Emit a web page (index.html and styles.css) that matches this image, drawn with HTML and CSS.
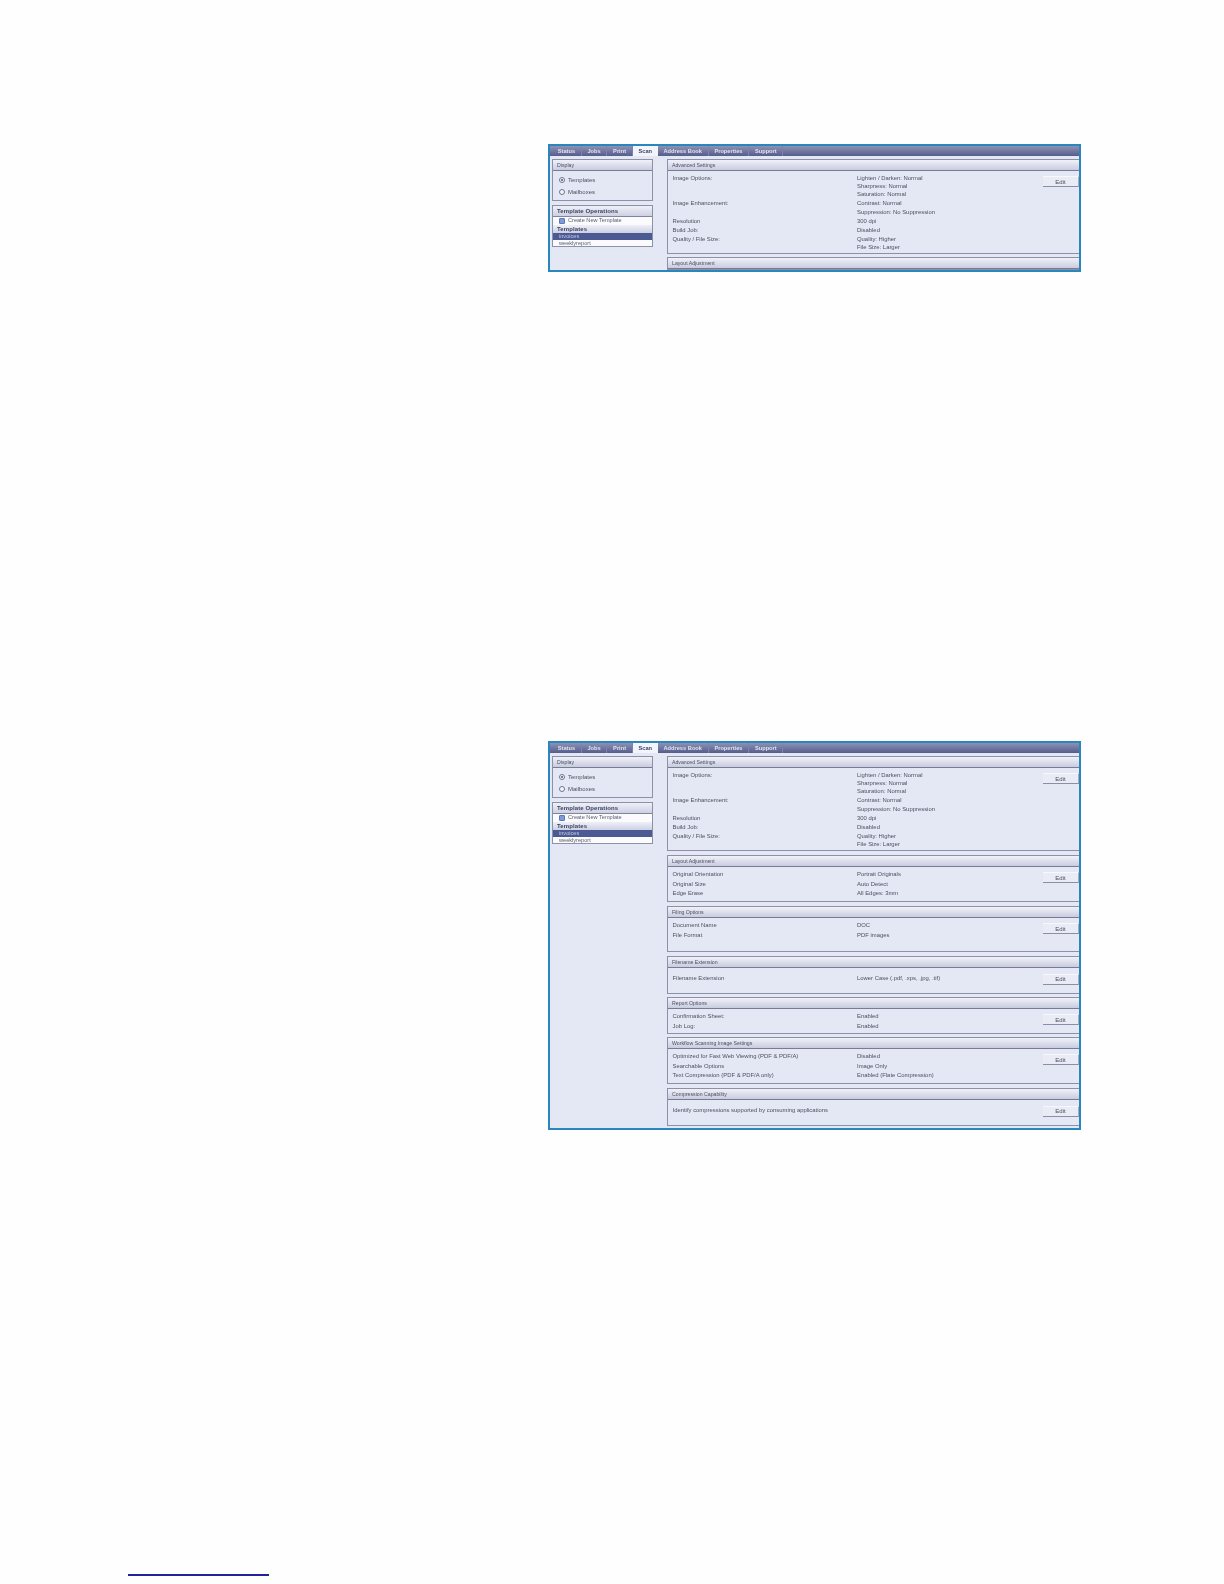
FILE: index.html
```html
<!DOCTYPE html>
<html lang="en">
<head>
<meta charset="utf-8">
<title>Scan</title>
<link rel="stylesheet" href="styles.css">
</head>
<body>
<main class="page">
  <div class="frame frame-a">
    <nav class="tabs"><a>Status</a><a>Jobs</a><a>Print</a><a class="on">Scan</a><a>Address Book</a><a>Properties</a><a>Support</a></nav>
    <div class="cols">
      <aside class="side">
        <div class="box display">
          <h3>Display</h3>
          <div class="opts">
            <label><i class="radio sel"></i>Templates</label>
            <label><i class="radio"></i>Mailboxes</label>
          </div>
        </div>
        <div class="box ops">
          <h4>Template Operations</h4>
          <div class="item create"><i class="ico"></i>Create New Template</div>
          <h4 class="h-small">Templates</h4>
          <div class="item cur">invoices</div>
          <div class="item">weeklyreport</div>
        </div>
      </aside>
      <div class="content">
        <section class="sec sec-adv">
          <h3>Advanced Settings</h3>
          <div class="body">
            <div class="rows">
              <div class="row r-3"><span>Image Options:</span><span>Lighten / Darken: Normal<br>Sharpness: Normal<br>Saturation: Normal</span></div>
              <div class="row r-2"><span>Image Enhancement:</span><span>Contrast: Normal<br>Suppression: No Suppression</span></div>
              <div class="row"><span>Resolution</span><span>300 dpi</span></div>
              <div class="row"><span>Build Job:</span><span>Disabled</span></div>
              <div class="row r-q"><span>Quality / File Size:</span><span>Quality: Higher<br>File Size: Larger</span></div>
            </div>
            <button class="edit">Edit</button>
          </div>
        </section>
        <section class="sec"><h3>Layout Adjustment</h3></section>
      </div>
    </div>
  </div>

  <div class="frame frame-b">
    <nav class="tabs"><a>Status</a><a>Jobs</a><a>Print</a><a class="on">Scan</a><a>Address Book</a><a>Properties</a><a>Support</a></nav>
    <div class="cols">
      <aside class="side">
        <div class="box display">
          <h3>Display</h3>
          <div class="opts">
            <label><i class="radio sel"></i>Templates</label>
            <label><i class="radio"></i>Mailboxes</label>
          </div>
        </div>
        <div class="box ops">
          <h4>Template Operations</h4>
          <div class="item create"><i class="ico"></i>Create New Template</div>
          <h4 class="h-small">Templates</h4>
          <div class="item cur">invoices</div>
          <div class="item">weeklyreport</div>
        </div>
      </aside>
      <div class="content">
        <section class="sec sec-adv">
          <h3>Advanced Settings</h3>
          <div class="body">
            <div class="rows">
              <div class="row r-3"><span>Image Options:</span><span>Lighten / Darken: Normal<br>Sharpness: Normal<br>Saturation: Normal</span></div>
              <div class="row r-2"><span>Image Enhancement:</span><span>Contrast: Normal<br>Suppression: No Suppression</span></div>
              <div class="row"><span>Resolution</span><span>300 dpi</span></div>
              <div class="row"><span>Build Job:</span><span>Disabled</span></div>
              <div class="row r-q"><span>Quality / File Size:</span><span>Quality: Higher<br>File Size: Larger</span></div>
            </div>
            <button class="edit">Edit</button>
          </div>
        </section>
        <section class="sec sec-layout">
          <h3>Layout Adjustment</h3>
          <div class="body">
            <div class="rows">
              <div class="row"><span>Original Orientation</span><span>Portrait Originals</span></div>
              <div class="row"><span>Original Size</span><span>Auto Detect</span></div>
              <div class="row"><span>Edge Erase</span><span>All Edges: 3mm</span></div>
            </div>
            <button class="edit">Edit</button>
          </div>
        </section>
        <section class="sec sec-filing">
          <h3>Filing Options</h3>
          <div class="body">
            <div class="rows">
              <div class="row"><span>Document Name</span><span>DOC</span></div>
              <div class="row"><span>File Format</span><span>PDF images</span></div>
            </div>
            <button class="edit">Edit</button>
          </div>
        </section>
        <section class="sec sec-ext">
          <h3>Filename Extension</h3>
          <div class="body body-mid">
            <div class="rows">
              <div class="row"><span>Filename Extension</span><span>Lower Case (.pdf, .xps, .jpg, .tif)</span></div>
            </div>
            <button class="edit">Edit</button>
          </div>
        </section>
        <section class="sec sec-report">
          <h3>Report Options</h3>
          <div class="body">
            <div class="rows">
              <div class="row"><span>Confirmation Sheet:</span><span>Enabled</span></div>
              <div class="row"><span>Job Log:</span><span>Enabled</span></div>
            </div>
            <button class="edit">Edit</button>
          </div>
        </section>
        <section class="sec sec-flow">
          <h3>Workflow Scanning Image Settings</h3>
          <div class="body">
            <div class="rows">
              <div class="row"><span>Optimized for Fast Web Viewing (PDF &amp; PDF/A)</span><span>Disabled</span></div>
              <div class="row"><span>Searchable Options</span><span>Image Only</span></div>
              <div class="row"><span>Text Compression (PDF &amp; PDF/A only)</span><span>Enabled (Flate Compression)</span></div>
            </div>
            <button class="edit">Edit</button>
          </div>
        </section>
        <section class="sec sec-comp">
          <h3>Compression Capability</h3>
          <div class="body body-mid">
            <div class="rows">
              <div class="row"><span>Identify compressions supported by consuming applications</span><span></span></div>
            </div>
            <button class="edit">Edit</button>
          </div>
        </section>
      </div>
    </div>
  </div>
  <div class="footnote-rule"></div>
</main>
</body>
</html>
```
FILE: styles.css
```css
* { box-sizing: border-box; }
html, body { margin: 0; padding: 0; background: #fefefe; }
body { height: 1584px; overflow: hidden; font-family: "Liberation Sans", Arial, sans-serif; color: #4c5060; }
.page { padding-top: 144px; }

.frame {
  margin-left: 548px;
  width: 533px;
  border: 2px solid #2a87bd;
  background: #e4e7f4;
  overflow: hidden;
  filter: blur(0.45px);
}
.frame-a { height: 128px; }
.frame-b { height: 389px; margin-top: 469px; }

.tabs {
  display: flex;
  height: 10px;
  background: linear-gradient(#8d92b4, #565d8c);
  padding-left: 2px;
}
.tabs a {
  font-size: 5.7px;
  font-weight: bold;
  line-height: 10px;
  padding: 0 5.7px;
  color: #dfe2f0;
  border-right: 1px solid #7d82a8;
}
.tabs a.on { background: #f3f4fb; color: #3e4466; border-right: 0; }

.cols { display: flex; padding-top: 3px; }
.side { width: 117px; flex: none; padding-left: 2px; }
.content { flex: 1; min-width: 0; }

.box { width: 101px; border: 1px solid #8d91a8; }
.box h3, .sec h3 {
  margin: 0;
  font-size: 5.2px;
  font-weight: normal;
  line-height: 10px;
  height: 11px;
  padding-left: 4px;
  color: #4a4e60;
  background: linear-gradient(#f0f1f8, #c9ccdf);
  border-bottom: 1px solid #777b94;
}
.display { height: 42px; }
.opts { padding-top: 3px; }
.opts label { display: flex; align-items: center; height: 12px; padding-left: 6px; font-size: 6px; color: #4c5060; }
.radio { width: 6px; height: 6px; margin-right: 3px; border: 1px solid #70748a; border-radius: 50%; background: #f4f5fb; display: flex; align-items: center; justify-content: center; }
.radio.sel::after { content: ""; width: 2px; height: 2px; border-radius: 50%; background: #50546a; }

.ops { margin-top: 4px; height: 42px; background: #fbfbfe; }
.ops h4 {
  margin: 0;
  height: 11px;
  line-height: 11px;
  padding-left: 4px;
  font-size: 6px;
  letter-spacing: 0.1px;
  color: #3e4460;
  background: linear-gradient(#eef0f8, #cdd0e2);
  border-bottom: 1px solid #80849c;
}
.ops h4.h-small { height: 8px; line-height: 8px; border-bottom: 0; }
.item { height: 7.5px; line-height: 7.5px; padding-left: 6px; font-size: 5.6px; color: #5a5e70; overflow: hidden; }
.item.create { display: flex; align-items: center; }
.ico { width: 6px; height: 6px; margin-right: 3px; border-radius: 1px; background: #7f9bd6; border: 1px solid #5f7ab8; flex: none; }
.item.cur { background: #4b5a92; color: #c4cbe6; }

.sec { display: flex; flex-direction: column; border: 1px solid #8d91a8; border-right: 0; margin-bottom: 4px; }
.sec h3 { flex: none; }
.body { display: flex; flex: 1; padding-top: 3px; }
.body-mid { align-items: center; padding: 0 0 3px; }
.rows { flex: 1; min-width: 0; padding-left: 4.5px; }
.row { display: grid; grid-template-columns: 184.5px 1fr; font-size: 5.9px; line-height: 9.6px; color: #4c5060; white-space: nowrap; }
.edit {
  flex: none;
  width: 36px;
  height: 11px;
  margin: 2px 0 0;
  padding: 0;
  font: 6px "Liberation Sans", Arial, sans-serif;
  color: #4a4e60;
  background: #e9ebf5;
  border: 0;
  border-top: 1px solid #f7f8fc;
  border-bottom: 1px solid #8a8ea6;
  border-right: 1px solid #a9adc2;
}
.body-mid .edit { margin: 0; }

.sec-adv { height: 95px; margin-bottom: 3px; }
.frame-b .sec-adv { margin-bottom: 4px; }
.sec-adv .body { padding-top: 4px; }
.sec-adv .edit { margin-top: 1px; }
.sec-adv .row { line-height: 9px; }
.sec-adv .r-3 { line-height: 7.8px; height: 24px; }
.sec-adv .r-2 { height: 18px; }
.sec-adv .r-q { line-height: 8px; }
.sec-layout { height: 47px; }
.sec-filing { height: 46px; }
.sec-ext { height: 38px; margin-bottom: 3px; }
.sec-report { height: 37px; margin-bottom: 3px; }
.sec-flow { height: 47px; }
.sec-comp { height: 38px; }

.footnote-rule { width: 141px; height: 2px; margin: 444px 0 0 128px; background: #2222a0; }
```
